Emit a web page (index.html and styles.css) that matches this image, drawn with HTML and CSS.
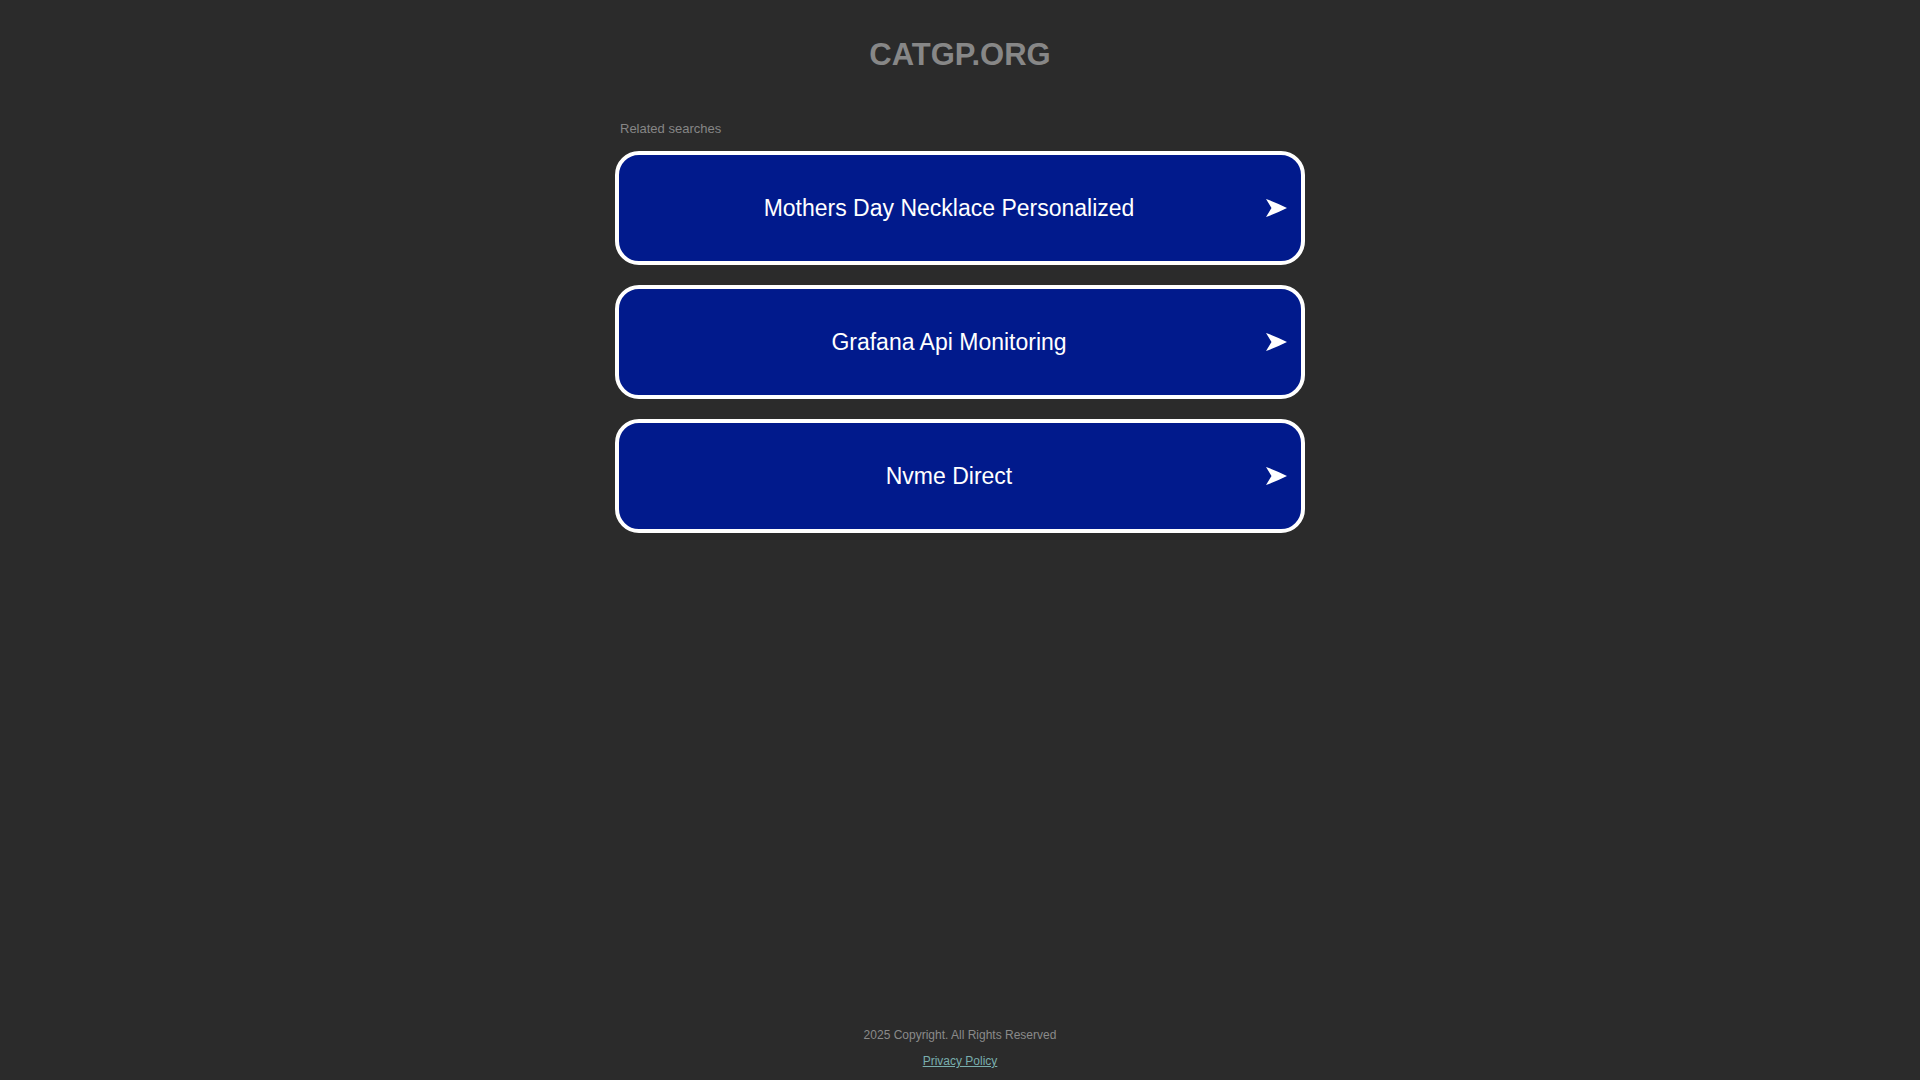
FILE: index.html
```html
<!DOCTYPE html>
<html lang="en">
<head>
<meta charset="utf-8">
<title>catgp.org</title>
<link rel="stylesheet" href="styles.css">
</head>
<body>
<div class="page">
  <header class="header">
    <h1 class="domain">CATGP.ORG</h1>
  </header>
  <main class="feed">
    <p class="feed-title">Related searches</p>
    <ul class="links">
      <li><a class="link" href="#"><span class="link-text">Mothers Day Necklace Personalized</span><svg class="arrow" viewBox="0 0 21 18" width="21" height="18"><path d="M0 0 Q10 3.5 21 9 Q10 14.5 0 18 L5.5 9 Z" fill="#ffffff"/></svg></a></li>
      <li><a class="link" href="#"><span class="link-text">Grafana Api Monitoring</span><svg class="arrow" viewBox="0 0 21 18" width="21" height="18"><path d="M0 0 Q10 3.5 21 9 Q10 14.5 0 18 L5.5 9 Z" fill="#ffffff"/></svg></a></li>
      <li><a class="link" href="#"><span class="link-text">Nvme Direct</span><svg class="arrow" viewBox="0 0 21 18" width="21" height="18"><path d="M0 0 Q10 3.5 21 9 Q10 14.5 0 18 L5.5 9 Z" fill="#ffffff"/></svg></a></li>
    </ul>
  </main>
  <footer class="footer">
    <p class="copyright">2025 Copyright. All Rights Reserved</p>
    <a class="privacy" href="#">Privacy Policy</a>
  </footer>
</div>
</body>
</html>
```
FILE: styles.css
```css
html, body {
  margin: 0;
  padding: 0;
  background: #2b2b2b;
}
body {
  font-family: "Liberation Sans", Arial, sans-serif;
}
.page {
  min-height: 100vh;
  display: flex;
  flex-direction: column;
  align-items: center;
}
.header {
  padding-top: 39px;
}
.domain {
  margin: 0;
  font-size: 31px;
  line-height: 32px;
  font-weight: bold;
  color: #878787;
  text-align: center;
}
.feed {
  width: 690px;
  margin-top: 50px;
}
.feed-title {
  margin: 0 0 14px 5px;
  font-size: 13px;
  line-height: 16px;
  color: #868686;
}
.links {
  list-style: none;
  margin: 0;
  padding: 0;
  display: flex;
  flex-direction: column;
  gap: 20px;
}
.link {
  box-sizing: border-box;
  height: 114px;
  display: flex;
  align-items: center;
  padding: 0 14px 0 13px;
  background: #011a8c;
  border: 4px solid #ffffff;
  border-radius: 24px;
  text-decoration: none;
  color: #ffffff;
}
.link-text {
  flex: 1;
  text-align: center;
  font-size: 23px;
  line-height: 28px;
}
.arrow {
  flex: none;
  display: block;
}
.footer {
  margin-top: auto;
  padding-bottom: 11px;
  display: flex;
  flex-direction: column;
  align-items: center;
}
.copyright {
  margin: 0;
  font-size: 12px;
  line-height: 16px;
  color: #8a8a8a;
}
.privacy {
  margin-top: 10px;
  font-size: 12px;
  line-height: 16px;
  color: #79aeae;
}
```
